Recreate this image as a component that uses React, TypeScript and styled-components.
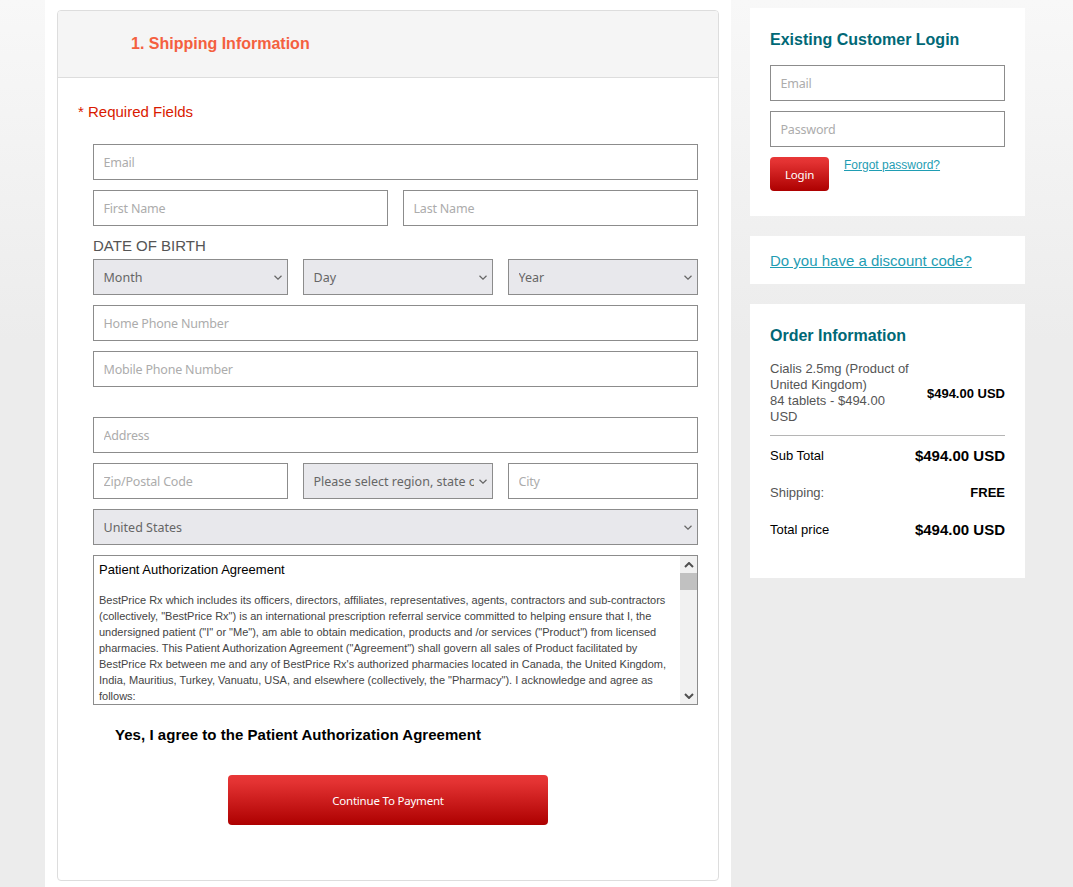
import React from 'react';
import styled, { createGlobalStyle } from 'styled-components';

const GlobalStyle = createGlobalStyle`
  html, body {
    margin: 0;
    padding: 0;
    height: 887px;
    overflow: hidden;
  }
  body {
    background: linear-gradient(#f8f8f8 0, #ececec 340px) no-repeat #ececec;
    font-family: "Liberation Sans", Arial, sans-serif;
  }
  * {
    box-sizing: border-box;
  }
`;

const Page = styled.div`
  display: flex;
  height: 887px;
  padding-left: 45px;
`;

const Main = styled.main`
  width: 686px;
  height: 887px;
  padding: 10px 12px 6px;
  background: #fff;
`;

const Panel = styled.section`
  height: 871px;
  border: 1px solid #dddddd;
  border-radius: 4px;
  overflow: hidden;
`;

const PanelHeader = styled.header`
  display: flex;
  align-items: center;
  height: 67px;
  padding-left: 73px;
  background: #f5f5f5;
  border-bottom: 1px solid #dddddd;
`;

const PanelTitle = styled.h2`
  margin: 0;
  font-size: 16px;
  font-weight: 700;
  color: #f4603f;
`;

const Required = styled.p`
  margin: 25px 0 23px 20px;
  font-size: 15px;
  line-height: 18px;
  color: #d91a00;
`;

const Form = styled.form`
  display: flex;
  flex-direction: column;
  gap: 10px;
  margin: 0 20px 0 35px;
`;

const Row = styled.div<{ $columns: string; $top?: number }>`
  display: grid;
  grid-template-columns: ${(p) => p.$columns};
  column-gap: 15px;
  margin-top: ${(p) => p.$top ?? 0}px;
`;

const TextInput = styled.input`
  display: block;
  width: 100%;
  height: 36px;
  padding: 0 9.5px;
  border: 1px solid #8c8c8c;
  border-radius: 0;
  outline: none;
  background: #fff;
  font-family: "Noto Sans", Tahoma, sans-serif;
  font-size: 12.5px;
  letter-spacing: -0.2px;
  color: #555;

  &::placeholder {
    color: #acacac;
    opacity: 1;
  }
`;

const SelectBox = styled.div`
  display: flex;
  align-items: center;
  width: 100%;
  height: 36px;
  padding: 0 5px 0 9.5px;
  border: 1px solid #8c8c8c;
  background: #e8e8ec;
  font-family: "Noto Sans", Tahoma, sans-serif;
  font-size: 12.5px;
  color: #666;
`;

const SelectLabel = styled.span`
  flex: 1;
  min-width: 0;
  overflow: hidden;
  white-space: nowrap;
`;

const Chevron = styled.svg`
  flex: none;
  width: 8px;
  height: 5px;
  margin-left: 5px;
  fill: none;
  stroke: #666;
  stroke-width: 1.2;
`;

const Select: React.FC<{ label: string }> = ({ label }) => (
  <SelectBox>
    <SelectLabel>{label}</SelectLabel>
    <Chevron viewBox="0 0 8 5">
      <path d="M.5.8L4 4.2 7.5.8" />
    </Chevron>
  </SelectBox>
);

const DobLabel = styled.div`
  margin: 1px 0 -6px;
  font-size: 15px;
  line-height: 18px;
  color: #555;
`;

const Agreement = styled.div`
  display: flex;
  height: 150px;
  border: 1px solid #8c8c8c;
  background: #fff;
`;

const AgreementText = styled.div`
  flex: 1;
  min-width: 0;
  padding: 6px 5px 0 5px;
  overflow: hidden;
`;

const AgreementTitle = styled.div`
  font-size: 13px;
  line-height: 16px;
  color: #000;
`;

const AgreementBody = styled.p`
  margin: 14px 0 0;
  font-size: 11px;
  line-height: 16px;
  color: #444;
`;

const ScrollTrack = styled.div`
  display: flex;
  flex-direction: column;
  flex: none;
  width: 17px;
  background: #f1f1f1;
`;

const ScrollButton = styled.div`
  display: flex;
  align-items: center;
  justify-content: center;
  height: 17px;
`;

const ScrollThumb = styled.div`
  height: 17px;
  background: #c1c1c1;
`;

const ScrollRest = styled.div`
  flex: 1;
`;

const ScrollArrow = styled.svg`
  width: 10px;
  height: 6px;
  fill: none;
  stroke: #505050;
  stroke-width: 2;
`;

const AgreeLine = styled.div`
  margin: 21px 0 0 57px;
  font-size: 15px;
  line-height: 18px;
  font-weight: 700;
  letter-spacing: 0.04px;
  color: #000;
`;

const ButtonRow = styled.div`
  display: flex;
  justify-content: center;
  margin-top: 31px;
`;

const RedButton = styled.button<{ $width: number; $height: number }>`
  width: ${(p) => p.$width}px;
  height: ${(p) => p.$height}px;
  padding: 0;
  border: 0;
  border-radius: 4px;
  background: linear-gradient(#e83737 0, #e33232 15%, #ad0000 100%);
  font-family: "Noto Sans", Tahoma, sans-serif;
  font-size: 11.5px;
  font-weight: 400;
  letter-spacing: -0.2px;
  color: #fff;
`;

const Side = styled.aside`
  display: flex;
  flex-direction: column;
  gap: 20px;
  width: 275px;
  margin-left: 19px;
  padding-top: 8px;
`;

const Card = styled.section<{ $height: number }>`
  height: ${(p) => p.$height}px;
  padding: 20px;
  background: #fff;
`;

const CardTitle = styled.h3`
  margin: 1px 0 0;
  font-size: 16px;
  line-height: 22px;
  font-weight: 700;
  color: #006876;
`;

const LoginFields = styled.div`
  display: flex;
  flex-direction: column;
  gap: 10px;
  margin-top: 14px;
`;

const LoginActions = styled.div`
  display: flex;
  align-items: flex-start;
  gap: 15px;
  margin-top: 10px;
`;

const Link = styled.a<{ $size: number; $top?: number }>`
  margin-top: ${(p) => p.$top ?? 0}px;
  font-size: ${(p) => p.$size}px;
  line-height: ${(p) => p.$size + 2}px;
  color: #1f9db3;
  text-decoration: underline;
`;

const DiscountCard = styled(Card)`
  display: flex;
  align-items: center;
  padding: 1px 20px 0;
`;

const OrderItem = styled.div`
  display: flex;
  align-items: center;
  justify-content: space-between;
  margin-top: 14px;
  padding-bottom: 10px;
  border-bottom: 1px solid #b5b5b5;
`;

const ItemName = styled.div`
  width: 142px;
  font-size: 13px;
  line-height: 16px;
  color: #555;
`;

const ItemPrice = styled.div`
  font-size: 13px;
  font-weight: 700;
  color: #000;
`;

const TotalRow = styled.div<{ $top: number }>`
  display: flex;
  align-items: center;
  justify-content: space-between;
  height: 20px;
  margin-top: ${(p) => p.$top}px;
`;

const TotalLabel = styled.span<{ $muted?: boolean }>`
  font-size: 13px;
  color: ${(p) => (p.$muted ? '#555' : '#000')};
`;

const TotalValue = styled.span<{ $size: number }>`
  font-size: ${(p) => p.$size}px;
  font-weight: 700;
  color: #000;
`;

export default function App() {
  return (
    <>
      <GlobalStyle />
      <Page>
        <Main>
          <Panel>
            <PanelHeader>
              <PanelTitle>1. Shipping Information</PanelTitle>
            </PanelHeader>
            <Required>* Required Fields</Required>
            <Form>
              <TextInput placeholder="Email" />
              <Row $columns="295px 295px">
                <TextInput placeholder="First Name" />
                <TextInput placeholder="Last Name" />
              </Row>
              <DobLabel>DATE OF BIRTH</DobLabel>
              <Row $columns="195px 190px 190px">
                <Select label="Month" />
                <Select label="Day" />
                <Select label="Year" />
              </Row>
              <TextInput placeholder="Home Phone Number" />
              <TextInput placeholder="Mobile Phone Number" />
              <Row $columns="1fr" $top={20}>
                <TextInput placeholder="Address" />
              </Row>
              <Row $columns="195px 190px 190px">
                <TextInput placeholder="Zip/Postal Code" />
                <Select label="Please select region, state or province" />
                <TextInput placeholder="City" />
              </Row>
              <Select label="United States" />
              <Agreement>
                <AgreementText>
                  <AgreementTitle>Patient Authorization Agreement</AgreementTitle>
                  <AgreementBody>
                    BestPrice Rx which includes its officers, directors, affiliates, representatives, agents, contractors and sub-contractors (collectively, "BestPrice Rx") is an international prescription referral service committed to helping ensure that I, the undersigned patient ("I" or "Me"), am able to obtain medication, products and /or services ("Product") from licensed pharmacies. This Patient Authorization Agreement ("Agreement") shall govern all sales of Product facilitated by BestPrice Rx between me and any of BestPrice Rx's authorized pharmacies located in Canada, the United Kingdom, India, Mauritius, Turkey, Vanuatu, USA, and elsewhere (collectively, the "Pharmacy"). I acknowledge and agree as follows:
                  </AgreementBody>
                </AgreementText>
                <ScrollTrack>
                  <ScrollButton>
                    <ScrollArrow viewBox="0 0 10 6">
                      <path d="M1 5l4-4 4 4" />
                    </ScrollArrow>
                  </ScrollButton>
                  <ScrollThumb />
                  <ScrollRest />
                  <ScrollButton>
                    <ScrollArrow viewBox="0 0 10 6">
                      <path d="M1 1l4 4 4-4" />
                    </ScrollArrow>
                  </ScrollButton>
                </ScrollTrack>
              </Agreement>
            </Form>
            <AgreeLine>Yes, I agree to the Patient Authorization Agreement</AgreeLine>
            <ButtonRow>
              <RedButton type="button" $width={320} $height={50}>Continue To Payment</RedButton>
            </ButtonRow>
          </Panel>
        </Main>
        <Side>
          <Card $height={208}>
            <CardTitle>Existing Customer Login</CardTitle>
            <LoginFields>
              <TextInput placeholder="Email" />
              <TextInput placeholder="Password" />
            </LoginFields>
            <LoginActions>
              <RedButton type="button" $width={59} $height={34}>Login</RedButton>
              <Link href="#" $size={12} $top={1}>Forgot password?</Link>
            </LoginActions>
          </Card>
          <DiscountCard $height={48}>
            <Link href="#" $size={15}>Do you have a discount code?</Link>
          </DiscountCard>
          <Card $height={274}>
            <CardTitle>Order Information</CardTitle>
            <OrderItem>
              <ItemName>
                Cialis 2.5mg (Product of United Kingdom)
                <br />
                84 tablets - $494.00 USD
              </ItemName>
              <ItemPrice>$494.00 USD</ItemPrice>
            </OrderItem>
            <TotalRow $top={9}>
              <TotalLabel>Sub Total</TotalLabel>
              <TotalValue $size={15}>$494.00 USD</TotalValue>
            </TotalRow>
            <TotalRow $top={17}>
              <TotalLabel $muted>Shipping:</TotalLabel>
              <TotalValue $size={13}>FREE</TotalValue>
            </TotalRow>
            <TotalRow $top={17}>
              <TotalLabel>Total price</TotalLabel>
              <TotalValue $size={15}>$494.00 USD</TotalValue>
            </TotalRow>
          </Card>
        </Side>
      </Page>
    </>
  );
}
